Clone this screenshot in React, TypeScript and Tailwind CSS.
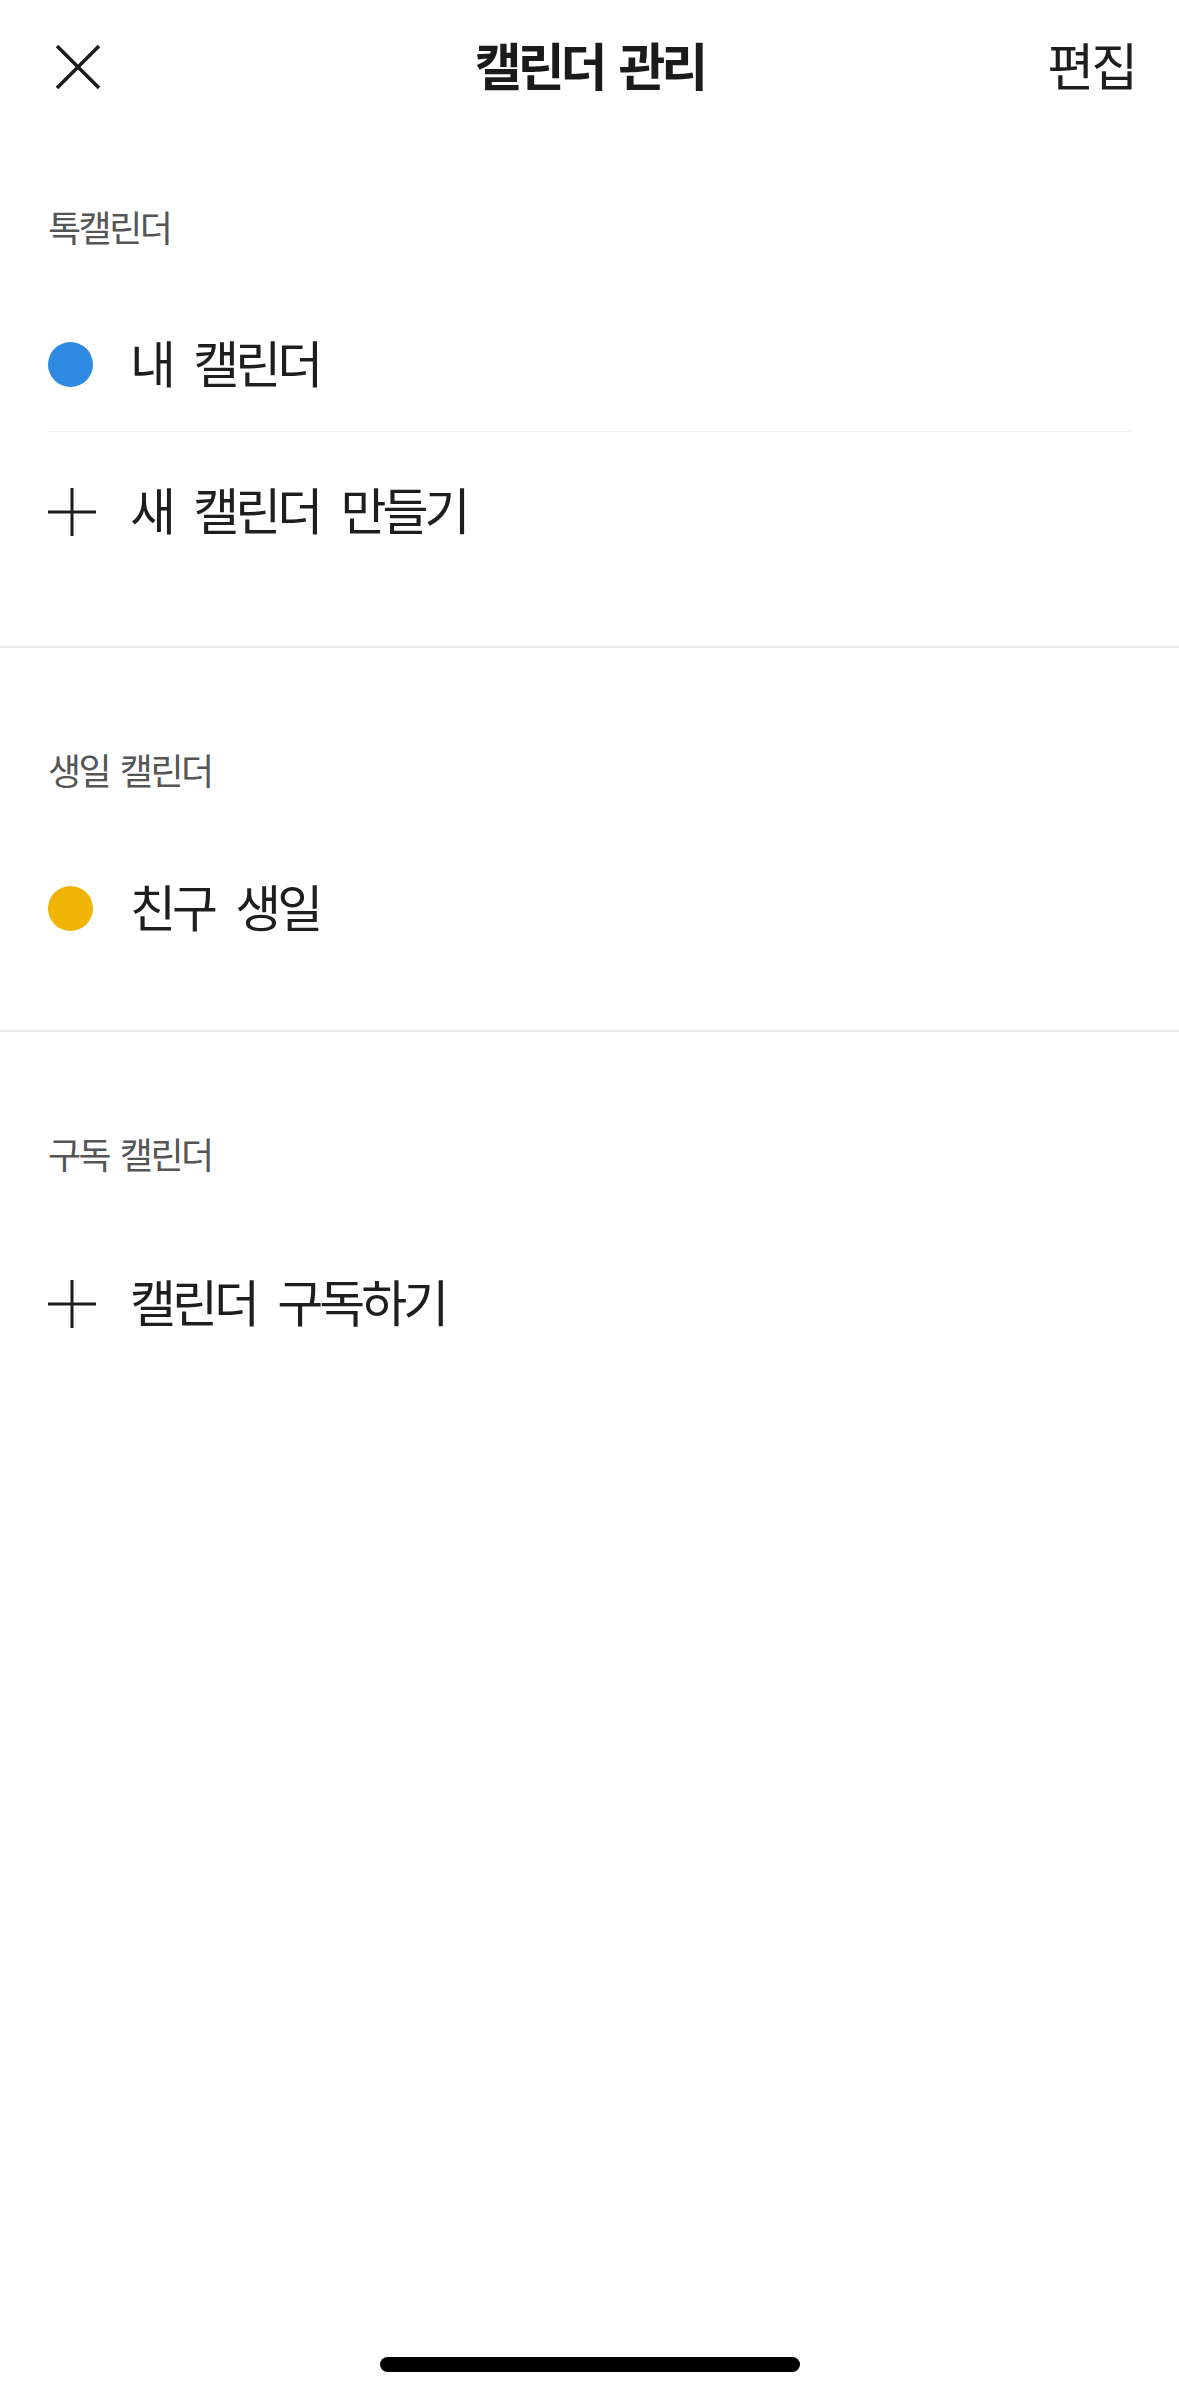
import type { ReactNode } from 'react'

function CloseIcon() {
  return (
    <svg width="46" height="46" viewBox="0 0 46 46" fill="none">
      <path d="M2 2L44 44M44 2L2 44" stroke="#1c1c1c" strokeWidth="3.6" />
    </svg>
  )
}

function PlusIcon() {
  return (
    <svg width="48" height="48" viewBox="0 0 48 48" fill="none">
      <path d="M24 0V48M0 24H48" stroke="#1c1c1c" strokeWidth="3" />
    </svg>
  )
}

function SectionLabel({ children }: { children: ReactNode }) {
  return (
    <div className="h-[44px] flex items-center px-[48px]">
      <span className="text-[36px] leading-none tracking-[-0.07em] [word-spacing:0.14em] text-[#555555]">
        {children}
      </span>
    </div>
  )
}

function Row({ icon, label, tall }: { icon: ReactNode; label: string; tall?: boolean }) {
  return (
    <div className={tall ? 'h-[160px] flex items-center px-[48px]' : 'h-[133px] flex items-center px-[48px]'}>
      <div className="w-[48px] flex items-center">{icon}</div>
      <span className="ml-[34px] pb-[8px] text-[50px] leading-none tracking-[-0.08em] [word-spacing:0.28em] text-[#1e1e1e]">
        {label}
      </span>
    </div>
  )
}

function Dot({ color }: { color: string }) {
  return <div className={`w-[45px] h-[45px] rounded-full ${color}`} />
}

export default function App() {
  return (
    <div className="w-[1179px] h-[2396px] bg-white flex flex-col font-['Noto_Sans_CJK_KR','Noto_Sans_CJK_SC',sans-serif]">
      {/* Header */}
      <div className="h-[134px] grid grid-cols-[1fr_auto_1fr] items-center px-[44px]">
        <div className="flex items-center pl-[11px]">
          <CloseIcon />
        </div>
        <h1 className="pb-[6px] text-[51px] leading-none font-bold tracking-[-0.08em] [word-spacing:0.15em] text-[#1b1b1b]">
          캘린더 관리
        </h1>
        <div className="flex justify-end">
          <span className="pb-[6px] text-[51px] leading-none tracking-[-0.06em] text-[#1e1e1e]">편집</span>
        </div>
      </div>

      {/* 톡캘린더 */}
      <section className="pt-[70px] pb-[54px]">
        <SectionLabel>톡캘린더</SectionLabel>
        <div className="mt-[50px]">
          <Row icon={<Dot color="bg-[#2e89e0]" />} label="내 캘린더" />
          <div className="mx-[48px] h-px bg-[#f1f1f1]" />
          <Row icon={<PlusIcon />} label="새 캘린더 만들기" tall />
        </div>
      </section>

      <div className="h-[2px] bg-[#ececec]" />

      {/* 생일 캘린더 */}
      <section className="pt-[99px] pb-[55px]">
        <SectionLabel>생일 캘린더</SectionLabel>
        <div className="mt-[51px]">
          <Row icon={<Dot color="bg-[#f0b405]" />} label="친구 생일" />
        </div>
      </section>

      <div className="h-[2px] bg-[#ececec]" />

      {/* 구독 캘린더 */}
      <section className="pt-[99px]">
        <SectionLabel>구독 캘린더</SectionLabel>
        <div className="mt-[49px]">
          <Row icon={<PlusIcon />} label="캘린더 구독하기" tall />
        </div>
      </section>

      <div className="flex-1" />

      {/* Home indicator */}
      <div className="flex justify-center mb-[24px]">
        <div className="w-[420px] h-[15px] rounded-full bg-black" />
      </div>
    </div>
  )
}
